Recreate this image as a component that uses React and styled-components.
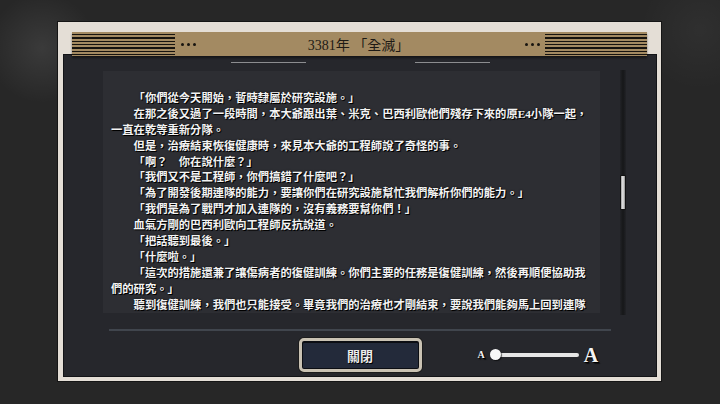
import React from "react";
import styled, { createGlobalStyle } from "styled-components";

const Global = createGlobalStyle`
  html, body { margin: 0; padding: 0; }
  body {
    width: 720px;
    height: 404px;
    overflow: hidden;
    background:
      radial-gradient(circle at 42px 48px, rgba(255,255,255,0.09) 0, rgba(255,255,255,0) 55px),
      radial-gradient(circle at 700px 30px, rgba(255,255,255,0.04) 0, rgba(255,255,255,0) 60px),
      #272727;
    font-family: "Liberation Serif", "Noto Sans CJK TC", serif;
  }
`;

const Page = styled.div`
  padding: 21px 0 0 57px;
`;

const Frame = styled.div`
  box-sizing: border-box;
  width: 605px;
  height: 361px;
  border: 1px solid #151515;
  background: #e4ded6;
  padding: 10px 4px 4px 5px;
  display: flex;
  flex-direction: column;
`;

const Header = styled.div`
  position: relative;
  z-index: 1;
  height: 24px;
  margin: 0 10px -2px 9px;
  background: #a38a62;
  display: flex;
  align-items: center;
  box-shadow: 0 2px 2px rgba(0, 0, 0, 0.45);
`;

const Stripes = styled.div`
  width: ${(p) => p.$w}px;
  align-self: stretch;
  background: repeating-linear-gradient(
    to bottom,
    #a38a62 0px,
    #a38a62 2px,
    #16130f 2px,
    #16130f 3.33px
  );
`;

const Dots = styled.div`
  display: flex;
  gap: 3px;
  margin: ${(p) => (p.$right ? "0 5px 0 0" : "0 0 0 6px")};
`;

const Dot = styled.span`
  width: 3px;
  height: 3px;
  border-radius: 50%;
  background: #17140f;
`;

const Title = styled.div`
  flex: 1;
  text-align: center;
  font-size: 14px;
  color: #1d1a15;
  padding-right: 4px;
`;

const Panel = styled.div`
  flex: 1;
  background: #26272c;
  border: 1px solid #131417;
  display: flex;
  flex-direction: column;
`;

const TabRow = styled.div`
  margin-top: 7px;
  height: 1px;
  display: flex;
  justify-content: center;
  gap: 109px;
`;

const TabLine = styled.div`
  width: 75px;
  height: 1px;
  background: #8c8d90;
`;

const Body = styled.div`
  margin-top: 8px;
  height: 243px;
  display: flex;
  padding-left: 39px;
`;

const TextBox = styled.div`
  width: 497px;
  height: 242px;
  background: #2d2e33;
  padding: 20px 0 0 8px;
  box-sizing: border-box;
  overflow: hidden;
`;

const Line = styled.div`
  font-size: 11.3px;
  line-height: 15.9px;
  height: 15.9px;
  font-weight: 700;
  color: #f3f3f3;
  white-space: nowrap;
  text-shadow: 1px 1px 0 #000, 0 0 2px rgba(0, 0, 0, 0.8);
  padding-left: ${(p) => (p.$indent ? "2em" : "0")};
`;

const Track = styled.div`
  margin-left: 20px;
  width: 6px;
  height: 245px;
  margin-top: -1px;
  background: linear-gradient(to right, #222327, #18191b 40%, #18191b 60%, #222327);
  position: relative;
`;

const Thumb = styled.div`
  position: absolute;
  left: 0;
  top: 105px;
  width: 6px;
  height: 35px;
  box-sizing: border-box;
  border: 1px solid #111;
  border-radius: 1px;
  background: linear-gradient(to right, #9a9a9a, #e6e6e6 45%, #c4c4c4 70%, #8a8a8a);
`;

const Separator = styled.div`
  margin: 15px 0 0 45px;
  width: 502px;
  height: 2px;
  background: #40454d;
`;

const Footer = styled.div`
  margin-top: 7px;
  height: 34px;
  display: grid;
  grid-template-columns: 1fr 123px 1fr;
  align-items: center;
`;

const Button = styled.button`
  grid-column: 2;
  height: 34px;
  width: 123px;
  box-sizing: border-box;
  border: 3px solid #c9c2b3;
  border-radius: 5px;
  background: #232a3a;
  box-shadow: inset 0 0 0 1px #0c0e13, 0 0 0 1px #1c1c1c, inset 0 1px 0 1px #0c0e13;
  color: #ececec;
  font-family: "Liberation Serif", "Noto Sans CJK TC", serif;
  font-size: 13px;
  font-weight: 700;
  text-shadow: 1px 1px 0 #000;
  padding: 0;
  cursor: pointer;
`;

const SizeControl = styled.div`
  grid-column: 3;
  display: flex;
  align-items: center;
  padding-left: 56px;
`;

const Letter = styled.span`
  font-family: "Liberation Serif", serif;
  font-weight: 700;
  font-size: ${(p) => p.$size}px;
  line-height: 1;
  color: #f4f4f4;
  text-shadow: 1px 1px 0 #000, 2px 2px 1px rgba(0,0,0,0.6);
`;

const SliderTrack = styled.div`
  position: relative;
  margin: 0 5px 0 10px;
  width: 84px;
  height: 4px;
  border-radius: 2px;
  background: #e6e6e6;
`;

const Knob = styled.div`
  position: absolute;
  left: -5px;
  top: -4px;
  width: 11px;
  height: 11px;
  border-radius: 50%;
  background: #f8f8f8;
  box-shadow: 1px 1px 1px rgba(0, 0, 0, 0.6);
`;

const lines = [
  { t: "「你們從今天開始，暫時隸屬於研究設施。」", i: true },
  { t: "在那之後又過了一段時間，本大爺跟出葉、米克、巴西利歐他們殘存下來的原E4小隊一起，", i: true },
  { t: "一直在乾等重新分隊。", i: false },
  { t: "但是，治療結束恢復健康時，來見本大爺的工程師說了奇怪的事。", i: true },
  { t: "「啊？　你在說什麼？」", i: true },
  { t: "「我們又不是工程師，你們搞錯了什麼吧？」", i: true },
  { t: "「為了開發後期連隊的能力，要讓你們在研究設施幫忙我們解析你們的能力。」", i: true },
  { t: "「我們是為了戰鬥才加入連隊的，沒有義務要幫你們！」", i: true },
  { t: "血氣方剛的巴西利歐向工程師反抗說道。", i: true },
  { t: "「把話聽到最後。」", i: true },
  { t: "「什麼啦。」", i: true },
  { t: "「這次的措施還兼了讓傷病者的復健訓練。你們主要的任務是復健訓練，然後再順便協助我", i: true },
  { t: "們的研究。」", i: false },
  { t: "聽到復健訓練，我們也只能接受。畢竟我們的治療也才剛結束，要說我們能夠馬上回到連隊", i: true },
];

export default function App() {
  return (
    <>
      <Global />
      <Page>
        <Frame>
          <Header>
            <Stripes $w={103} />
            <Dots>
              <Dot />
              <Dot />
              <Dot />
            </Dots>
            <Title>3381年 「全滅」</Title>
            <Dots $right>
              <Dot />
              <Dot />
              <Dot />
            </Dots>
            <Stripes $w={102} />
          </Header>
          <Panel>
            <TabRow>
              <TabLine />
              <TabLine />
            </TabRow>
            <Body>
              <TextBox>
                {lines.map((l, k) => (
                  <Line key={k} $indent={l.i}>
                    {l.t}
                  </Line>
                ))}
              </TextBox>
              <Track>
                <Thumb />
              </Track>
            </Body>
            <Separator />
            <Footer>
              <Button>關閉</Button>
              <SizeControl>
                <Letter $size={10}>A</Letter>
                <SliderTrack>
                  <Knob />
                </SliderTrack>
                <Letter $size={20}>A</Letter>
              </SizeControl>
            </Footer>
          </Panel>
        </Frame>
      </Page>
    </>
  );
}
